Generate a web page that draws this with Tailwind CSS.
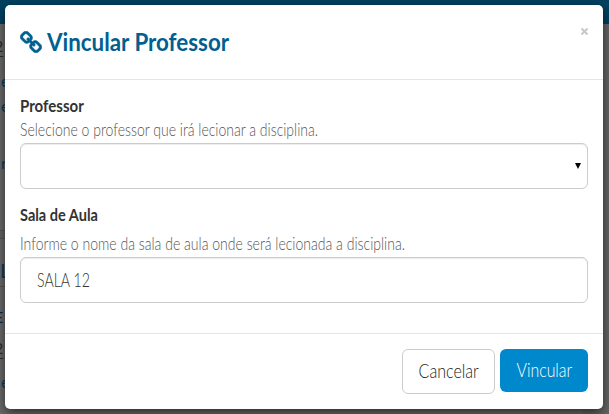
<!DOCTYPE html>
<html lang="pt-BR">
<head>
<meta charset="utf-8">
<title>Vincular Professor</title>
<script src="https://cdn.jsdelivr.net/npm/@tailwindcss/browser@4"></script>
</head>
<body class="relative h-[414px] w-[609px] overflow-hidden bg-[#6b6b6b] font-['Lato','Liberation_Sans',sans-serif]">
<!-- Page under the backdrop -->
<div class="absolute inset-0 text-[16px] leading-none text-[#003f60]">
  <div class="h-6 bg-[#004160]"></div>
  <span class="absolute -left-[6px] top-[38px] text-[#222f3a] underline underline-offset-4">2</span>
  <span class="absolute left-[1px] top-[73px]">e</span>
  <span class="absolute left-[1px] top-[98px]">e</span>
  <span class="absolute left-[1px] top-[155px]">r</span>
  <div class="absolute top-[230px] h-[9px] w-full border-y border-[#585858] bg-[#626567]"></div>
  <span class="absolute left-0 top-[260px] text-[20px]">L</span>
  <div class="absolute top-[286px] h-px w-full bg-[#595959]"></div>
  <span class="absolute -left-[6px] top-[309px] text-[#002b48]">E</span>
  <span class="absolute -left-[6px] top-[340px] text-[#222f3a] underline underline-offset-4">2</span>
  <span class="absolute left-[1px] top-[374px]">e</span>
  <div class="absolute right-0 top-6 h-[390px] w-[27px] bg-[#666666]"></div>
</div>
<!-- Dialog -->
<main class="absolute left-[5px] top-[5px] flex h-[404px] w-[598px] flex-col rounded-[5px] bg-white shadow-[0_4px_12px_rgba(0,0,0,0.6)]">
  <header class="flex h-[75px] shrink-0 justify-between border-b border-[#e5e5e5] px-[15px]">
    <h1 class="flex items-center gap-[5px] text-[25px] font-bold text-[#006090]">
      <svg class="h-[22px] w-[22px]" viewBox="0 0 1664 1664" fill="currentColor" stroke="currentColor" stroke-width="40"><path d="M1456 1216q0-40-28-68l-208-208q-28-28-68-28-42 0-72 32 3 3 19 18.500t21.500 21.500 15 19 13 25.500 3.500 27.500q0 40-28 68t-68 28q-15 0-27.500-3.500t-25.500-13-19-15-21.500-21.500-18.500-19q-33 31-33 73 0 40 28 68l206 207q27 27 68 27 40 0 68-26l147-146q28-28 28-67zm-703-705q0-40-28-68l-206-207q-28-28-68-28-39 0-68 27l-147 146q-28 28-28 67 0 40 28 68l208 208q27 27 68 27 42 0 72-31-3-3-19-18.500t-21.500-21.500-15-19-13-25.500-3.500-27.500q0-40 28-68t68-28q15 0 27.500 3.500t25.500 13 19 15 21.500 21.500 18.500 19q33-31 33-73zm895 705q0 120-85 203l-147 146q-83 83-203 83-121 0-204-85l-206-207q-83-83-83-203 0-123 88-209l-88-88q-86 88-208 88-120 0-204-84l-208-208q-84-84-84-204t85-203l147-146q83-83 203-83 121 0 204 85l206 207q83 83 83 203 0 123-88 209l88 88q86-88 208-88 120 0 204 84l208 208q84 84 84 204z"/></svg>
      <span class="inline-block origin-left scale-x-[0.894] whitespace-nowrap">Vincular Professor</span>
    </h1>
    <button class="mt-[16px] flex h-5 items-center text-[#c8c8c8]"><svg class="h-[7px] w-[7px]" viewBox="0 0 7 7" stroke="currentColor" stroke-width="2"><path d="M.5.500l6 6M6.500.500l-6 6"/></svg></button>
  </header>
  <section class="flex h-[253px] shrink-0 flex-col px-[15px] pt-[14px]">
    <label class="h-6 text-[17px] font-bold leading-6 text-[#333]"><span class="inline-block origin-left scale-x-[0.885] whitespace-nowrap">Professor</span></label>
    <p class="h-[25px] text-[17px] font-light leading-[24px] text-[#555]"><span class="inline-block origin-left scale-x-[0.825] whitespace-nowrap">Selecione o professor que irá lecionar a disciplina.</span></p>
    <div class="flex h-[46px] items-center justify-end rounded-[6px] border border-[#ccc] pr-[6px] shadow-[inset_0_1px_1px_rgba(0,0,0,0.075)]">
      <svg class="h-[6px] w-[6px]" viewBox="0 0 6 6"><path d="M0 0h6L3 6z"/></svg>
    </div>
    <label class="mt-[14px] h-[29px] text-[17px] font-bold leading-6 text-[#333]"><span class="inline-block origin-left scale-x-[0.855] whitespace-nowrap">Sala de Aula</span></label>
    <p class="h-[25px] text-[17px] font-light leading-6 text-[#555]"><span class="inline-block origin-left scale-x-[0.825] whitespace-nowrap">Informe o nome da sala de aula onde será lecionada a disciplina.</span></p>
    <div class="flex h-[46px] shrink-0 items-center rounded-[6px] border border-[#ccc] px-4 text-[19px] font-light text-[#333] shadow-[inset_0_1px_1px_rgba(0,0,0,0.075)]"><span class="inline-block origin-left scale-x-[0.745] whitespace-nowrap">SALA 12</span></div>
  </section>
  <footer class="flex flex-1 items-start justify-end gap-[5px] border-t border-[#e5e5e5] px-[15px] pt-[15px] text-[19px] font-light">
    <button class="flex h-[45px] w-[93px] items-center justify-center rounded-[6px] border border-[#ccc] text-[#222]"><span class="inline-block scale-x-[0.845]">Cancelar</span></button>
    <button class="flex h-[43px] w-[88px] items-center justify-center rounded-[6px] bg-[#0088cc] text-white"><span class="inline-block scale-x-[0.835]">Vincular</span></button>
  </footer>
</main>
</body>
</html>
